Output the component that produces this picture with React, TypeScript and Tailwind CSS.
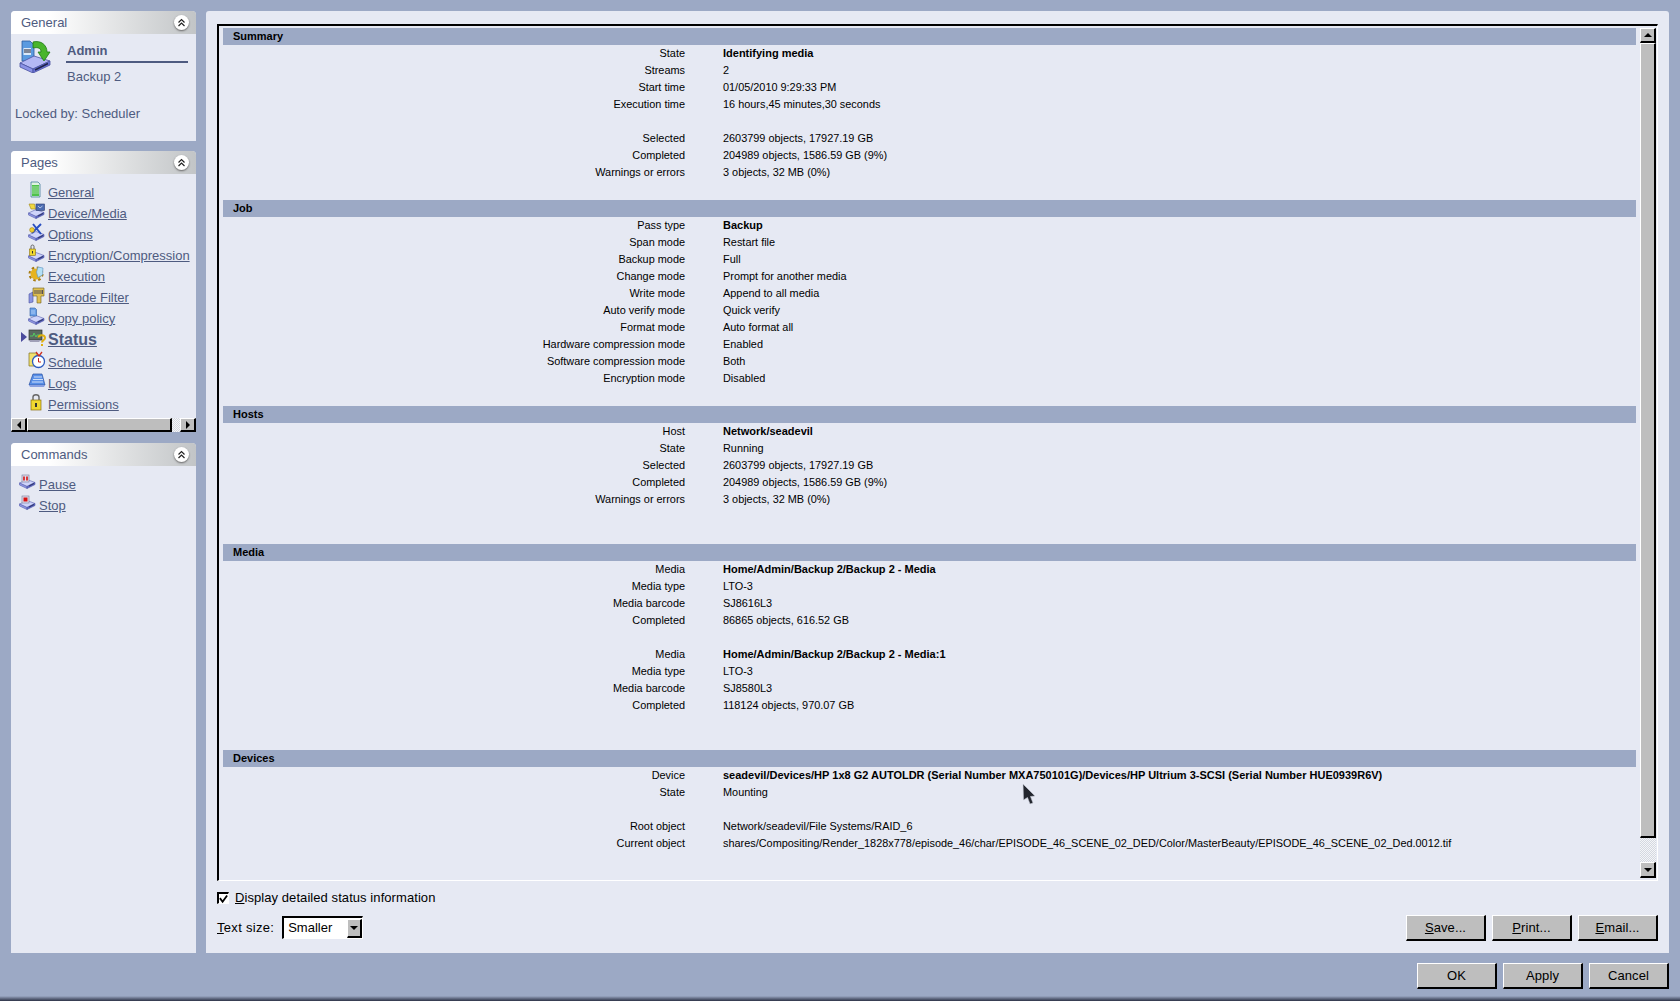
import type { ReactNode } from 'react';

type Row = { label: string; value: string; bold?: boolean };

const summary: Row[] = [
  { label: 'State', value: 'Identifying media', bold: true },
  { label: 'Streams', value: '2' },
  { label: 'Start time', value: '01/05/2010 9:29:33 PM' },
  { label: 'Execution time', value: '16 hours,45 minutes,30 seconds' },
  { label: '', value: '' },
  { label: 'Selected', value: '2603799 objects, 17927.19 GB' },
  { label: 'Completed', value: '204989 objects, 1586.59 GB (9%)' },
  { label: 'Warnings or errors', value: '3 objects, 32 MB (0%)' },
  { label: '', value: '' },
];

const job: Row[] = [
  { label: 'Pass type', value: 'Backup', bold: true },
  { label: 'Span mode', value: 'Restart file' },
  { label: 'Backup mode', value: 'Full' },
  { label: 'Change mode', value: 'Prompt for another media' },
  { label: 'Write mode', value: 'Append to all media' },
  { label: 'Auto verify mode', value: 'Quick verify' },
  { label: 'Format mode', value: 'Auto format all' },
  { label: 'Hardware compression mode', value: 'Enabled' },
  { label: 'Software compression mode', value: 'Both' },
  { label: 'Encryption mode', value: 'Disabled' },
  { label: '', value: '' },
];

const hosts: Row[] = [
  { label: 'Host', value: 'Network/seadevil', bold: true },
  { label: 'State', value: 'Running' },
  { label: 'Selected', value: '2603799 objects, 17927.19 GB' },
  { label: 'Completed', value: '204989 objects, 1586.59 GB (9%)' },
  { label: 'Warnings or errors', value: '3 objects, 32 MB (0%)' },
  { label: '', value: '' },
  { label: '', value: '' },
];

const media: Row[] = [
  { label: 'Media', value: 'Home/Admin/Backup 2/Backup 2 - Media', bold: true },
  { label: 'Media type', value: 'LTO-3' },
  { label: 'Media barcode', value: 'SJ8616L3' },
  { label: 'Completed', value: '86865 objects, 616.52 GB' },
  { label: '', value: '' },
  { label: 'Media', value: 'Home/Admin/Backup 2/Backup 2 - Media:1', bold: true },
  { label: 'Media type', value: 'LTO-3' },
  { label: 'Media barcode', value: 'SJ8580L3' },
  { label: 'Completed', value: '118124 objects, 970.07 GB' },
  { label: '', value: '' },
  { label: '', value: '' },
];

const devices: Row[] = [
  {
    label: 'Device',
    value: 'seadevil/Devices/HP 1x8 G2 AUTOLDR (Serial Number MXA750101G)/Devices/HP Ultrium 3-SCSI (Serial Number HUE0939R6V)',
    bold: true,
  },
  { label: 'State', value: 'Mounting' },
  { label: '', value: '' },
  { label: 'Root object', value: 'Network/seadevil/File Systems/RAID_6' },
  {
    label: 'Current object',
    value: 'shares/Compositing/Render_1828x778/episode_46/char/EPISODE_46_SCENE_02_DED/Color/MasterBeauty/EPISODE_46_SCENE_02_Ded.0012.tif',
  },
];

function Section({ title, rows }: { title: string; rows: Row[] }) {
  return (
    <section className="mb-[2px]">
      <h2 className="h-[17px] bg-[#9ca9c5] pl-[10px] text-[11px] leading-[17px] font-bold text-black">{title}</h2>
      {rows.map((r, i) => (
        <div key={i} className="flex h-[17px] text-[10.9px] leading-[17px] text-black">
          <div className="w-[462px] shrink-0 text-right">{r.label}</div>
          <div className={`ml-[38px] whitespace-nowrap ${r.bold ? 'text-[11px] font-bold' : ''}`}>{r.value}</div>
        </div>
      ))}
    </section>
  );
}

function Chevrons() {
  return (
    <span className="flex h-[15px] w-[15px] items-center justify-center rounded-full bg-white shadow-[0_1px_2px_#666]">
      <svg width="9" height="9" viewBox="0 0 9 9" fill="none" stroke="#222" strokeWidth="1.2">
        <path d="M1.5 4.5 4.5 1.5 7.5 4.5M1.5 8 4.5 5 7.5 8" />
      </svg>
    </span>
  );
}

function Card({ title, className, children }: { title: string; className: string; children: ReactNode }) {
  return (
    <div className={`overflow-hidden rounded-t-[4px] bg-[#e6e9f3] ${className}`}>
      <div className="flex h-[23px] items-center justify-between bg-gradient-to-r from-white from-20% to-[#c2c5c7] pr-[7px] pl-[10px]">
        <span className="text-[13px] text-[#4e5b80]">{title}</span>
        <Chevrons />
      </div>
      {children}
    </div>
  );
}

function DriveBase({ x = 0, y = 0 }: { x?: number; y?: number }) {
  return (
    <g transform={`translate(${x} ${y})`}>
      <path d="M0.5 8 8 4.5 16 7.5 8 11.5Z" fill="#cfd4fa" stroke="#5a62b0" strokeWidth="0.6" />
      <path d="M0.5 8 8 11.5 8 13.5 0.5 10Z" fill="#8f97e4" stroke="#5a62b0" strokeWidth="0.6" />
      <path d="M8 11.5 16 7.5 16 9.5 8 13.5Z" fill="#5f69cc" stroke="#4a52a0" strokeWidth="0.6" />
      <path d="M10 11 15 8.5" stroke="#20264e" strokeWidth="0.8" />
    </g>
  );
}

function AdminIcon() {
  return (
    <svg width="33" height="34" viewBox="0 0 33 34">
      <path d="M3 2H11L15 6V22H3Z" fill="#5a9ae0" stroke="#2c5aa0" strokeWidth="0.8" />
      <path d="M4.5 9H12V16H4.5Z" fill="#dbe9fa" />
      <path d="M5 11H12M5 13H12" stroke="#223" strokeWidth="1" />
      <path d="M1 24 15 17 31 22 14 30Z" fill="#b4b8f4" stroke="#4a52a0" strokeWidth="0.8" />
      <path d="M1 24 14 30 14 34 1 28Z" fill="#8c93e6" stroke="#4a52a0" strokeWidth="0.8" />
      <path d="M14 30 31 22 31 26 14 34Z" fill="#6a72d8" stroke="#4a52a0" strokeWidth="0.8" />
      <path d="M16 31 29 24.5" stroke="#1e2248" strokeWidth="1.6" />
      <path d="M14 3C22 1 28 6 28 13L31 13 25 22 19 13 22 13C22 9 19 8 14 9Z" fill="#49b52c" stroke="#1f7a14" strokeWidth="0.8" />
    </svg>
  );
}

function PageIcon({ name }: { name: string }) {
  return (
    <svg width="18" height="18" viewBox="0 0 18 18">
      {name === 'General' && (
        <g>
          <path d="M3 1H10L12 3V16H3Z" fill="#dff3e0" stroke="#2f6f8f" strokeWidth="0.7" />
          <path d="M4 4H11V15H4Z" fill="#4fc24a" />
          <path d="M4 6H11M4 8H11M4 10H11M4 12H11" stroke="#d8f0d8" strokeWidth="0.6" />
        </g>
      )}
      {name === 'Device/Media' && (
        <g>
          <DriveBase y={3} />
          <path d="M1 2H6.5L7.5 7H3Z" fill="#f0d840" stroke="#a08820" strokeWidth="0.6" />
          <rect x="8" y="2" width="8.5" height="6.5" fill="#4a6ab0" stroke="#2a3a70" strokeWidth="0.6" />
          <path d="M10 4 12 6 14.5 4" stroke="#e0e8ff" strokeWidth="0.7" fill="none" />
        </g>
      )}
      {name === 'Options' && (
        <g>
          <DriveBase y={4} />
          <path d="M5 1 13 11M13 1 4 10" stroke="#2a50c0" strokeWidth="2" />
          <circle cx="4" cy="7" r="2.4" fill="#f0d030" stroke="#907010" strokeWidth="0.5" />
        </g>
      )}
      {name === 'Encryption/Compression' && (
        <g>
          <DriveBase y={4} />
          <path d="M3 5V2.5C3 .5 6 .5 6 2.5V5" fill="none" stroke="#555" strokeWidth="0.9" />
          <rect x="1.5" y="5" width="6" height="6.5" fill="#f0d830" stroke="#8a7010" strokeWidth="0.6" />
          <rect x="4" y="7" width="1" height="2.5" fill="#333" />
        </g>
      )}
      {name === 'Execution' && (
        <g>
          <circle cx="8" cy="9" r="5.5" fill="#e6b420" />
          <circle cx="8" cy="9" r="6.5" fill="none" stroke="#a87c10" strokeWidth="2" strokeDasharray="2.5 2.6" />
          <path d="M10 2 15 3 14.5 10 10 12.5 8.5 7Z" fill="#b4e0f6" stroke="#5a90c0" strokeWidth="0.6" />
        </g>
      )}
      {name === 'Barcode Filter' && (
        <g>
          <path d="M1 8 5 6V16L1 17Z" fill="#8a94e0" stroke="#4a52a0" strokeWidth="0.6" />
          <path d="M5 2H16V10H13V17H9V10H5Z" fill="#e0c050" stroke="#706020" strokeWidth="0.6" />
          <path d="M7 4V8M9 4V8M11 4V8M13 4V8M14.5 4V8" stroke="#335" strokeWidth="0.8" />
        </g>
      )}
      {name === 'Copy policy' && (
        <g>
          <DriveBase y={4} />
          <path d="M2 1H7L8.5 2.5V9H2Z" fill="#6aa0e8" stroke="#2c5aa0" strokeWidth="0.6" />
          <path d="M3 4H7M3 6H7" stroke="#dce8fa" strokeWidth="0.6" />
        </g>
      )}
      {name === 'Status' && (
        <g>
          <rect x="1" y="1" width="13" height="10" fill="#5a6a60" stroke="#333" strokeWidth="0.7" />
          <path d="M2 7H5L6 4 8 8 9 6H13" fill="none" stroke="#50e060" strokeWidth="0.8" />
          <path d="M1 11H13L11 13H2Z" fill="#a0a0b8" />
          <path d="M10.5 8.5C10.5 5.5 17 5.5 17 9 17 11 14 11 14 13.5M14 15V17" fill="none" stroke="#e0b010" strokeWidth="2" />
        </g>
      )}
      {name === 'Schedule' && (
        <g>
          <path d="M1 2H9V15H1Z" fill="#f0e070" stroke="#807020" strokeWidth="0.7" />
          <circle cx="10.5" cy="10.5" r="6" fill="#fff" stroke="#2c5ac0" strokeWidth="1.3" />
          <path d="M10.5 7V11H13" stroke="#c02020" strokeWidth="1" fill="none" />
          <path d="M8 1 11 5 14 1" stroke="#d03020" strokeWidth="1.3" fill="none" />
        </g>
      )}
      {name === 'Logs' && (
        <g>
          <path d="M5 2H14L17 13H1Z" fill="#5a90e8" stroke="#2a50a0" strokeWidth="0.7" />
          <path d="M6 5H14M5 7.5H15M4 10H15" stroke="#dce8fa" strokeWidth="0.9" />
          <path d="M1 13H17L16 15H2Z" fill="#8aa0e0" />
        </g>
      )}
      {name === 'Permissions' && (
        <g>
          <path d="M5 7V4C5 1 11 1 11 4V7" fill="none" stroke="#666" strokeWidth="1.4" />
          <rect x="3" y="7" width="10" height="10" fill="#f0d830" stroke="#8a7010" strokeWidth="0.7" />
          <rect x="7" y="10" width="2" height="4" fill="#333" />
        </g>
      )}
    </svg>
  );
}

function CommandIcon({ stop }: { stop?: boolean }) {
  return (
    <svg width="17" height="16" viewBox="0 0 17 16">
      <DriveBase x={0} y={1} />
      <rect x="3" y="1" width="7" height="7" fill="#dcdcec" stroke="#7a7a98" strokeWidth="0.6" />
      {stop ? (
        <rect x="4.5" y="2.5" width="4" height="4" fill="#d81010" />
      ) : (
        <path d="M5 2.5V6.5M8 2.5V6.5" stroke="#d81010" strokeWidth="1.6" />
      )}
    </svg>
  );
}

const pages = [
  'General',
  'Device/Media',
  'Options',
  'Encryption/Compression',
  'Execution',
  'Barcode Filter',
  'Copy policy',
  'Status',
  'Schedule',
  'Logs',
  'Permissions',
];

function Arrow({ dir }: { dir: 'up' | 'down' | 'left' | 'right' }) {
  const points = {
    up: '1,7 5,3 9,7',
    down: '1,3 5,7 9,3',
    left: '7,1 3,5 7,9',
    right: '3,1 7,5 3,9',
  }[dir];
  return (
    <svg width="10" height="10" viewBox="0 0 10 10">
      <polygon points={points} fill="#000" />
    </svg>
  );
}

function ScrollButton({ dir, className }: { dir: 'up' | 'down' | 'left' | 'right'; className: string }) {
  return (
    <div className={`flex shrink-0 items-center justify-center border-t border-r-2 border-b-2 border-l border-t-white border-r-black border-b-black border-l-white bg-[#bebebe] ${className}`}>
      <Arrow dir={dir} />
    </div>
  );
}

function MotifButton({ children }: { children: ReactNode }) {
  return (
    <button className="h-[26px] w-[80px] border-t border-r-2 border-b-2 border-l border-t-white border-r-black border-b-black border-l-white bg-[#bebebe] text-[13px] tracking-[0.1px] text-black">
      {children}
    </button>
  );
}

export default function App() {
  return (
    <div className="relative flex h-[1001px] w-[1680px] flex-col overflow-hidden bg-[#9ca9c5] pt-[11px] font-['Liberation_Sans',Arial,sans-serif]">
      <div className="flex h-[942px] gap-[10px] px-[11px]">
        {/* Left column */}
        <div className="flex w-[185px] shrink-0 flex-col">
          <Card title="General" className="h-[130px]">
            <div className="flex pt-[5px] pl-[8px]">
              <AdminIcon />
              <div className="ml-[14px] w-[122px]">
                <div className="h-[24px] border-b-2 border-[#4e5b80] pt-[1px] pl-[1px] text-[13px] leading-[22px] font-bold text-[#4e5b80]">
                  Admin
                </div>
                <div className="pt-[6px] pl-[1px] text-[13px] leading-[15px] text-[#4e5b80]">Backup 2</div>
              </div>
            </div>
            <div className="pt-[22px] pl-[4px] text-[13px] leading-[16px] text-[#4e5b80]">Locked by: Scheduler</div>
          </Card>

          <Card title="Pages" className="mt-[10px] flex h-[281px] flex-col">
            <div className="min-h-0 flex-1 pt-[8px]">
              {pages.map((p) => {
                const active = p === 'Status';
                return (
                  <div key={p} className={`relative flex items-center pl-[17px] ${active ? 'h-[23px]' : 'h-[21px]'}`}>
                    {active && (
                      <svg className="absolute top-[3px] left-[10px]" width="6" height="10" viewBox="0 0 6 10">
                        <polygon points="0,0 6,5 0,10" fill="#4a4a9c" />
                      </svg>
                    )}
                    <span className="mt-[-6px] w-[20px] shrink-0">
                      <PageIcon name={p} />
                    </span>
                    <a className={`whitespace-nowrap text-[#4e5b80] underline ${active ? 'relative top-[-1px] text-[16px] font-bold' : 'text-[13px]'}`}>{p}</a>
                  </div>
                );
              })}
            </div>
            <div className="flex h-[14px] shrink-0 bg-[repeating-conic-gradient(#d4d8e0_0_25%,#f4f5f8_0_50%)] bg-[length:2px_2px]">
              <ScrollButton dir="left" className="h-[14px] w-[16px]" />
              <div className="h-[14px] w-[145px] border-t border-r-2 border-b-2 border-l border-t-white border-r-black border-b-black border-l-white bg-[#bebebe]" />
              <div className="flex-1" />
              <ScrollButton dir="right" className="h-[14px] w-[16px]" />
            </div>
          </Card>

          <Card title="Commands" className="mt-[11px] min-h-0 flex-1">
            <div className="pt-[8px] pl-[8px]">
              {['Pause', 'Stop'].map((c) => (
                <div key={c} className="flex h-[21px] items-center">
                  <span className="mt-[-5px] w-[20px] shrink-0">
                    <CommandIcon stop={c === 'Stop'} />
                  </span>
                  <a className="text-[13px] text-[#4e5b80] underline">{c}</a>
                </div>
              ))}
            </div>
          </Card>
        </div>

        {/* Main panel */}
        <div className="flex min-w-0 flex-1 flex-col rounded-t-[3px] bg-[#e6e9f3] px-[11px] pt-[13px]">
          <div className="flex h-[857px] shrink-0 border-t-2 border-r border-b border-l-2 border-t-black border-r-white border-b-white border-l-black py-[2px] pr-[1px] pl-[4px]">
            <div className="min-w-0 flex-1 overflow-hidden">
              <Section title="Summary" rows={summary} />
              <Section title="Job" rows={job} />
              <Section title="Hosts" rows={hosts} />
              <Section title="Media" rows={media} />
              <Section title="Devices" rows={devices} />
            </div>
            <div className="ml-[4px] flex w-[16px] shrink-0 flex-col bg-[repeating-conic-gradient(#d4d8e0_0_25%,#f4f5f8_0_50%)] bg-[length:2px_2px]">
              <ScrollButton dir="up" className="h-[15px] w-[16px]" />
              <div className="h-[795px] w-[16px] border-t border-r-2 border-b-2 border-l border-t-white border-r-black border-b-black border-l-white bg-[#bebebe]" />
              <div className="flex-1" />
              <ScrollButton dir="down" className="h-[16px] w-[16px]" />
            </div>
          </div>

          <label className="mt-[11px] flex h-[12px] items-center text-[13px] tracking-[0.07px] text-black">
            <span className="flex h-[12px] w-[12px] items-center justify-center border-t-2 border-r border-b border-l-2 border-t-black border-r-white border-b-white border-l-black bg-white">
              <svg width="10" height="10" viewBox="0 0 10 10" fill="none" stroke="#000" strokeWidth="2">
                <path d="M1 4 4 8 9 1" />
              </svg>
            </span>
            <span className="ml-[6px]">
              <u>D</u>isplay detailed status information
            </span>
          </label>

          <div className="mt-[12px] flex items-start">
            <div className="flex h-[23px] items-center text-[13px] text-black">
              <span className="tracking-[0.3px]">
                <u>T</u>ext size:
              </span>
              <div className="ml-[8px] flex h-[23px] w-[81px] items-center border-t-2 border-r border-b border-l-2 border-t-black border-r-white border-b-white border-l-black bg-white pl-[4px]">
                <span className="flex-1">Smaller</span>
                <span className="flex h-[19px] w-[15px] items-center justify-center border-t border-r-2 border-b-2 border-l border-t-white border-r-black border-b-black border-l-white bg-[#bebebe]">
                  <Arrow dir="down" />
                </span>
              </div>
            </div>
            <div className="mt-[-1px] ml-auto flex gap-[6px]">
              <MotifButton>
                <u>S</u>ave...
              </MotifButton>
              <MotifButton>
                <u>P</u>rint...
              </MotifButton>
              <MotifButton>
                <u>E</u>mail...
              </MotifButton>
            </div>
          </div>
        </div>
      </div>

      <div className="mt-[10px] flex justify-end gap-[6px] pr-[11px]">
        <MotifButton>OK</MotifButton>
        <MotifButton>Apply</MotifButton>
        <MotifButton>Cancel</MotifButton>
      </div>

      <div className="mt-auto h-[5px] bg-gradient-to-b from-[#9ca9c5] to-[#2e3448]" />

      {/* mouse pointer */}
      <svg className="absolute top-[783px] left-[1022px]" width="15" height="22" viewBox="0 0 15 22">
        <path d="M1 1 13 13 8.5 13.5 11 20 8 21 5.5 14.5 1.5 17Z" fill="#23262e" stroke="#c8cbd6" strokeWidth="0.6" />
      </svg>
    </div>
  );
}
